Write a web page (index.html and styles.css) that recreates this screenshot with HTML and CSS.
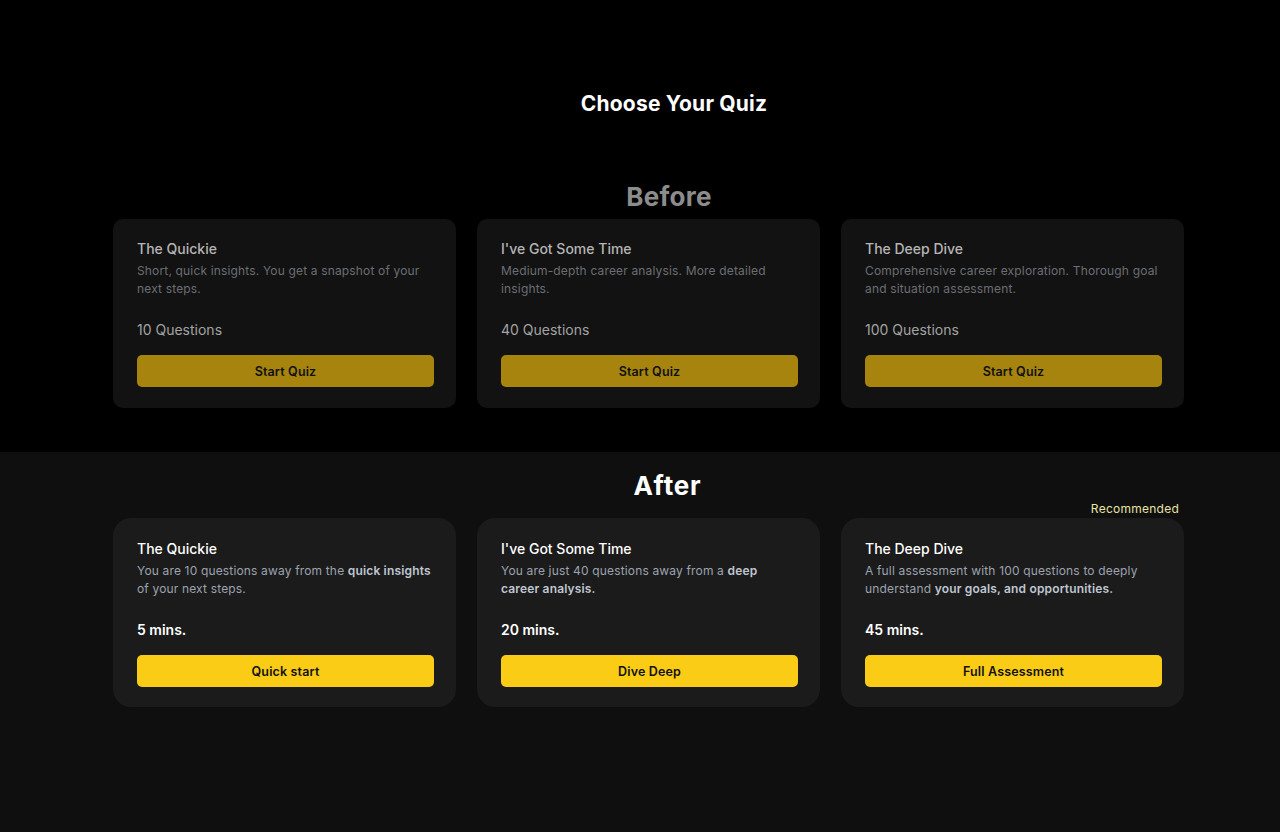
FILE: index.html
```html
<!DOCTYPE html>
<html lang="en">
<head>
<meta charset="utf-8">
<title>Choose Your Quiz</title>
<link rel="stylesheet" href="styles.css">
</head>
<body>
<section class="before">
  <div class="wrap">
    <h1 class="page-title">Choose Your Quiz</h1>
    <h2 class="label label-before">Before</h2>
    <div class="cards">
      <div class="card card-old">
        <h3 class="card-title">The Quickie</h3>
        <p class="card-desc">Short, quick insights. You get a snapshot of your next steps.</p>
        <p class="card-meta">10 Questions</p>
        <button class="btn btn-old">Start Quiz</button>
      </div>
      <div class="card card-old">
        <h3 class="card-title">I've Got Some Time</h3>
        <p class="card-desc">Medium-depth career analysis. More detailed insights.</p>
        <p class="card-meta">40 Questions</p>
        <button class="btn btn-old">Start Quiz</button>
      </div>
      <div class="card card-old">
        <h3 class="card-title">The Deep Dive</h3>
        <p class="card-desc">Comprehensive career exploration. Thorough goal and situation assessment.</p>
        <p class="card-meta">100 Questions</p>
        <button class="btn btn-old">Start Quiz</button>
      </div>
    </div>
  </div>
</section>
<section class="after">
  <div class="wrap">
    <h2 class="label label-after">After</h2>
    <div class="cards">
      <div class="card card-new">
        <h3 class="card-title">The Quickie</h3>
        <p class="card-desc">You are 10 questions away from the <b>quick insights</b> of your next steps.</p>
        <p class="card-meta">5 mins.</p>
        <button class="btn btn-new">Quick start</button>
      </div>
      <div class="card card-new">
        <h3 class="card-title">I've Got Some Time</h3>
        <p class="card-desc">You are just 40 questions away from a <b>deep</b><br><b>career analysis.</b></p>
        <p class="card-meta">20 mins.</p>
        <button class="btn btn-new">Dive Deep</button>
      </div>
      <div class="card card-new card-rec">
        <span class="rec">Recommended</span>
        <h3 class="card-title">The Deep Dive</h3>
        <p class="card-desc">A full assessment with 100 questions to deeply understand <b>your goals, and opportunities.</b></p>
        <p class="card-meta">45 mins.</p>
        <button class="btn btn-new">Full Assessment</button>
      </div>
    </div>
  </div>
</section>
</body>
</html>
```
FILE: styles.css
```css
* { box-sizing: border-box; }
html, body { margin: 0; padding: 0; }
body {
  background: #000;
  font-family: Inter, "Noto Sans", sans-serif;
  color: #fff;
  width: 1280px;
  height: 832px;
  overflow: hidden;
}
.wrap {
  width: 1071px;
  margin-left: 113px;
}
.before {
  background: #000;
  height: 452px;
  padding-top: 90px;
}
.after {
  background: #0f0f0f;
  height: 380px;
  padding-top: 18px;
}
.page-title {
  margin: 0;
  font-size: 21px;
  line-height: 28px;
  font-weight: 700;
  letter-spacing: 0.2px;
  text-align: center;
  padding-left: 51px;
  color: #fff;
}
.label {
  margin: 0;
  font-size: 26px;
  line-height: 32px;
  font-weight: 700;
  text-align: center;
}
.label-before {
  margin-top: 63px;
  color: #8c8c8c;
  padding-left: 41px;
  letter-spacing: 0.3px;
}
.label-after {
  color: #fff;
  padding-left: 38px;
  letter-spacing: 0.8px;
}
.cards {
  display: grid;
  grid-template-columns: repeat(3, 343px);
  column-gap: 21px;
  margin-top: 6px;
}
.after .cards { margin-top: 16px; }
.card {
  position: relative;
  padding: 21px 23px 20px 23px;
  display: flex;
  flex-direction: column;
}
.card-old {
  background: #121212;
  border-radius: 10px;
  padding-top: 20px;
  padding-bottom: 21px;
}
.card-new {
  background: #1b1b1b;
  border-radius: 18px;
}
.card-title {
  margin: 0 0 0 1px;
  font-size: 14px;
  line-height: 20px;
  font-weight: 500;
}
.card-old .card-title { color: #b5b5b5; }
.card-new .card-title { color: #fff; }
.card-desc {
  margin: 3px 0 0 1px;
  font-size: 12px;
  line-height: 18px;
  height: 36px;
  font-weight: 400;
  letter-spacing: 0.16px;
}
.card-old .card-desc { color: #6b6e73; }
.card-new .card-desc { color: #9ca3af; }
.card-desc b { font-weight: 600; color: #bfc6d1; }
.card-meta {
  margin: 22px 0 0 1px;
  font-size: 14px;
  line-height: 20px;
}
.card-old .card-meta { color: #a3a3a3; font-weight: 400; }
.card-new .card-meta { color: #fff; font-weight: 600; }
.btn {
  margin: 15px 0 0 1px;
  height: 32px;
  width: 100%;
  border: 0;
  border-radius: 5px;
  font-family: Inter, "Noto Sans", sans-serif;
  font-size: 12.5px;
  letter-spacing: 0.15px;
  font-weight: 600;
  color: #111;
  padding: 0;
}
.btn-old { background: #a6840e; }
.btn-new { background: #facc15; }
.rec {
  position: absolute;
  top: -17px;
  right: 5px;
  font-size: 12px;
  line-height: 16px;
  letter-spacing: 0.25px;
  color: #e9e2a6;
}
```
